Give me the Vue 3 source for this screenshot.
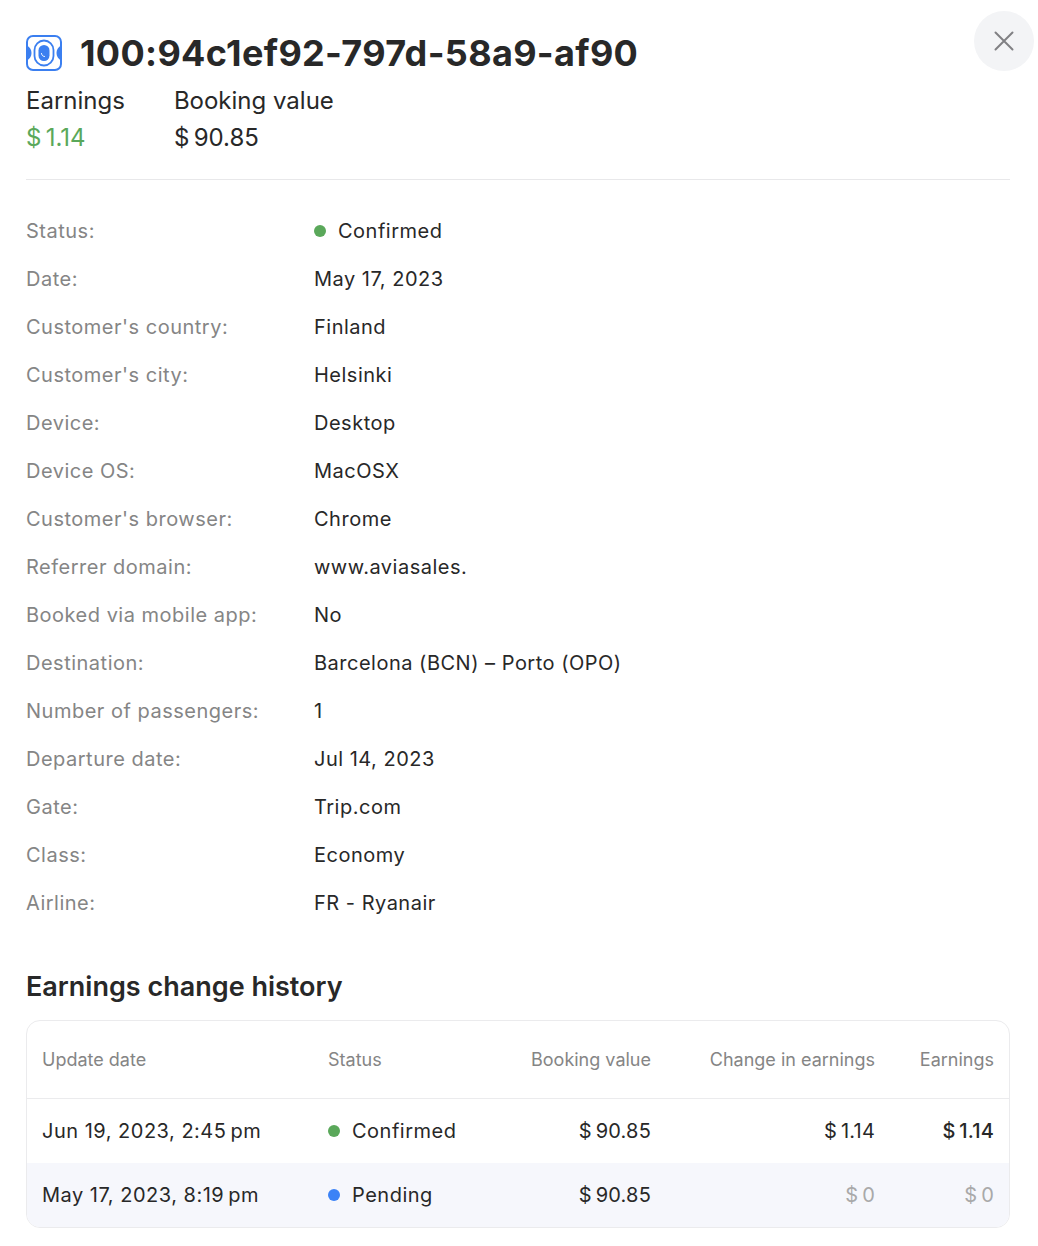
<script setup>
const details = [
  ['Status:', 'Confirmed'],
  ['Date:', 'May 17, 2023'],
  ["Customer's country:", 'Finland'],
  ["Customer's city:", 'Helsinki'],
  ['Device:', 'Desktop'],
  ['Device OS:', 'MacOSX'],
  ["Customer's browser:", 'Chrome'],
  ['Referrer domain:', 'www.aviasales.'],
  ['Booked via mobile app:', 'No'],
  ['Destination:', 'Barcelona (BCN) – Porto (OPO)'],
  ['Number of passengers:', '1'],
  ['Departure date:', 'Jul 14, 2023'],
  ['Gate:', 'Trip.com'],
  ['Class:', 'Economy'],
  ['Airline:', 'FR - Ryanair'],
]
const rows = [
  { date: 'Jun 19, 2023, 2:45 pm', status: 'Confirmed', dot: 'green', value: '90.85', change: '1.14', earn: '1.14', zero: false },
  { date: 'May 17, 2023, 8:19 pm', status: 'Pending', dot: 'blue', value: '90.85', change: '0', earn: '0', zero: true },
]
</script>

<template>
  <div class="modal">
    <button class="close" aria-label="Close">
      <svg width="20" height="20" viewBox="0 0 20 20" fill="none" stroke="#808084" stroke-width="2" stroke-linecap="round">
        <path d="M1.5 1.5 18.5 18.5M18.5 1.5 1.5 18.5" />
      </svg>
    </button>
    <header class="head">
      <svg class="logo" width="36" height="36" viewBox="0 0 36 36" fill="none">
        <rect x="1" y="1" width="34" height="34" rx="6" stroke="#3b7ff0" stroke-width="2" />
        <path d="M1 10.5c3 1.5 4.5 4.5 4.5 7.5s-1.500 6-4.500 7.500z M35 10.500c-3 1.500-4.500 4.500-4.500 7.500s1.500 6 4.500 7.500z" fill="#3b7ff0" />
        <rect x="8.500" y="5.500" width="19" height="25" rx="9.500" stroke="#3b7ff0" stroke-width="1.800" />
        <rect x="12.500" y="10" width="11" height="16" rx="5.500" fill="#3b7ff0" />
        <path d="M15.500 18.500c.3 2 1.500 3 3 3" stroke="#fff" stroke-width="1" stroke-linecap="round" />
      </svg>
      <h1>100:94c1ef92-797d-58a9-af90</h1>
    </header>
    <div class="stats">
      <div class="stat">
        <div class="stat-label">Earnings</div>
        <div class="stat-value green">$&#8201;1.14</div>
      </div>
      <div class="stat">
        <div class="stat-label">Booking value</div>
        <div class="stat-value">$&#8201;90.85</div>
      </div>
    </div>
    <dl class="details">
      <div v-for="(d, i) in details" :key="d[0]" class="detail">
        <dt>{{ d[0] }}</dt>
        <dd>
          <span v-if="i === 0" class="dot green-bg"></span>{{ d[1] }}
        </dd>
      </div>
    </dl>
    <h2>Earnings change history</h2>
    <div class="table">
      <div class="tr th">
        <div>Update date</div>
        <div>Status</div>
        <div class="num">Booking value</div>
        <div class="num">Change in earnings</div>
        <div class="num">Earnings</div>
      </div>
      <div v-for="(r, i) in rows" :key="r.date" class="tr td" :class="{ alt: i === 1 }">
        <div>{{ r.date.slice(0, -3) }}&#8201;pm</div>
        <div class="st"><span class="dot" :class="r.dot + '-bg'"></span>{{ r.status }}</div>
        <div class="num">$&#8201;{{ r.value }}</div>
        <div class="num" :class="{ zero: r.zero }">$&#8201;{{ r.change }}</div>
        <div class="num" :class="r.zero ? 'zero' : 'strong'">$&#8201;{{ r.earn }}</div>
      </div>
    </div>
  </div>
</template>

<style>
html, body { margin: 0; background: #fff; }
</style>

<style scoped>
.modal {
  position: relative;
  box-sizing: border-box;
  width: 1038px;
  height: 1246px;
  padding: 31px 28px 0 26px;
  background: #fff;
  color: #282828;
  font-family: Inter, "Liberation Sans", sans-serif;
  font-size: 20px;
  line-height: 24px;
  letter-spacing: 0.5px;
  overflow: hidden;
}
.close {
  position: absolute;
  top: 11px;
  right: 4px;
  width: 60px;
  height: 60px;
  border: 0;
  border-radius: 50%;
  background: #f3f4f6;
  display: flex;
  align-items: center;
  justify-content: center;
  padding: 0;
}
.head { display: flex; align-items: center; gap: 18px; height: 44px; }
.logo { flex: none; }
h1 { margin: 0; font-size: 36px; line-height: 44px; font-weight: 700; letter-spacing: 0.33px; }
.stats { display: flex; gap: 49px; margin-top: 11px; padding-bottom: 27px; border-bottom: 1px solid #e8e8ea; letter-spacing: 0; }
.stat-label { line-height: 30px; font-size: 24px; }
.stat-value { line-height: 30px; margin-top: 7px; font-size: 24px; margin-bottom: -1px; }
.green { color: #5aa85a; }
.details { margin: 27px 0 0; }
.detail { display: flex; height: 48px; align-items: center; }
dt { width: 288px; color: #858585; }
dd { margin: 0; display: flex; align-items: center; }
.dot { width: 12px; height: 12px; border-radius: 50%; margin-right: 12px; flex: none; }
.green-bg { background: #5aa85a; }
.blue-bg { background: #3b82f6; }
h2 { margin: 42px 0 0; font-size: 27px; line-height: 36px; font-weight: 600; letter-spacing: 0; }
.table { margin-top: 15px; border: 1px solid #ebebed; border-radius: 14px; overflow: hidden; }
.tr { display: grid; grid-template-columns: 286px 150px 173px 224px 119px; padding: 0 15px; align-items: center; }
.th { height: 77px; color: #858585; font-size: 18px; letter-spacing: 0; border-bottom: 1px solid #ebebed; }
.td { height: 64px; }
.td .num { letter-spacing: 0.2px; }
.td.alt { background: #f6f7fc; }
.num { text-align: right; }
.st { display: flex; align-items: center; }
.zero { color: #a9a9a9; }
.strong { font-weight: 500; }
</style>
